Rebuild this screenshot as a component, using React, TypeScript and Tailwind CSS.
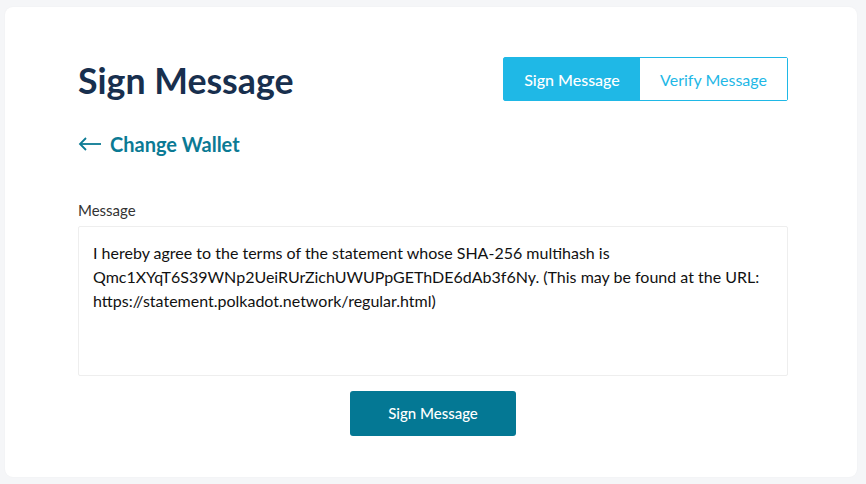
import React from "react";

export default function App() {
  return (
    <div className="min-h-[484px] w-[866px] bg-[#f5f6f8] pt-[7px] pl-[5px]" style={{ fontFamily: "Lato, 'Open Sans', sans-serif" }}>
      <div className="w-[852px] h-[470px] bg-white rounded-[8px] shadow-[0_0_2px_rgba(0,0,0,0.04)] pl-[73px] pr-[69px] pt-[50px]">
        <div className="flex justify-between items-start">
          <h1 className="text-[35.7px] leading-[44px] font-bold text-[#182f4e] mt-[2px]">Sign Message</h1>
          <div className="flex h-[44px] border border-[#1fb8e6] rounded-[2px] text-[16px] leading-[20px]">
            <button className="w-[136px] bg-[#1fb8e6] text-white font-medium pt-[2px]">Sign Message</button>
            <button className="w-[147px] bg-white text-[#1fb8e6] pt-[2px]">Verify Message</button>
          </div>
        </div>
        <div className="mt-[29px] flex items-center gap-[8px] text-[#0b7a94]">
          <svg width="24" height="14" viewBox="0 0 24 14" fill="none" stroke="currentColor" strokeWidth="1.8">
            <path d="M23 7H2" />
            <path d="M8 1L2 7l6 6" />
          </svg>
          <span className="text-[20px] font-bold leading-[24px]">Change Wallet</span>
        </div>
        <div className="mt-[44px] text-[15px] leading-[20px] text-[#333]">Message</div>
        <div className="mt-[6px] h-[150px] border border-[#eeeeee] rounded-[2px] px-[14px] pt-[14px] text-[16px] leading-[24px] text-[#111]">
          I hereby agree to the terms of the statement whose SHA-256 multihash is Qmc1XYqT6S39WNp2UeiRUrZichUWUPpGEThDE6dAb3f6Ny. (This may be found at the URL: https://statement.polkadot.network/regular.html)
        </div>
        <div className="flex justify-center mt-[15px]">
          <button className="w-[166px] h-[45px] bg-[#047894] text-white rounded-[3px] text-[15px] font-medium">Sign Message</button>
        </div>
      </div>
    </div>
  );
}
